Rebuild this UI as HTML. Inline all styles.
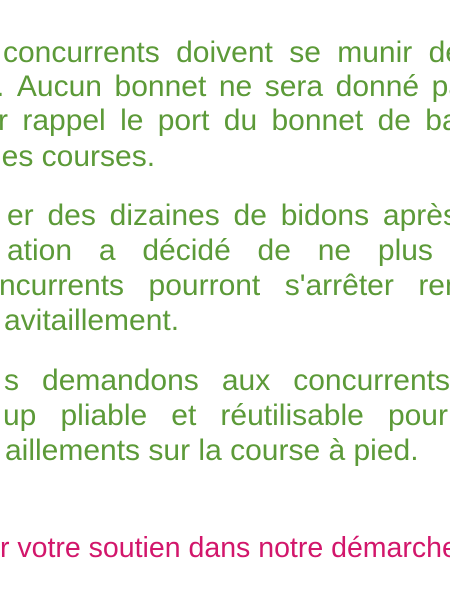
<!DOCTYPE html>
<html><head><meta charset="utf-8"><style>
html,body{margin:0;padding:0;background:#fff;width:450px;height:600px;overflow:hidden;position:relative}
.l{position:absolute;height:35px;line-height:35px;font-family:"Liberation Sans",Arial,sans-serif;font-size:30px;color:#5c9a38;white-space:nowrap}
.j{display:flex;justify-content:space-between}
.p{color:#d2166b;font-size:28.5px}
</style></head><body>
<div class="l j" style="top:35px;left:3px;width:459px"><span>concurrents</span><span>doivent</span><span>se</span><span>munir</span><span>de</span></div>
<div class="l j" style="top:69px;left:-4px;width:479px"><span>.</span><span>Aucun</span><span>bonnet</span><span>ne</span><span>sera</span><span>donné</span><span>par</span></div>
<div class="l j" style="top:103px;left:-2px;width:484px"><span>r</span><span>rappel</span><span>le</span><span>port</span><span>du</span><span>bonnet</span><span>de</span><span>bain</span></div>
<div class="l" style="top:139px;left:-5px">les courses.</div>

<div class="l j" style="top:198px;left:7px;width:451px"><span>er</span><span>des</span><span>dizaines</span><span>de</span><span>bidons</span><span>après</span></div>
<div class="l j" style="top:233px;left:7px;width:426px"><span>ation</span><span>a</span><span>décidé</span><span>de</span><span>ne</span><span>plus</span></div>
<div class="l j" style="top:268px;left:-1px;width:511px"><span>ncurrents</span><span>pourront</span><span>s'arrêter</span><span>remplir</span></div>
<div class="l" style="top:303px;left:4px">avitaillement.</div>

<div class="l j" style="top:363px;left:4px;width:446px"><span>s</span><span>demandons</span><span>aux</span><span>concurrents</span></div>
<div class="l j" style="top:398px;left:3px;width:445px"><span>up</span><span>pliable</span><span>et</span><span>réutilisable</span><span>pour</span></div>
<div class="l" style="top:433px;left:5px">aillements sur la course à pied.</div>

<div class="l p" style="top:531px;left:0px">r votre soutien dans notre démarche</div>
</body></html>
